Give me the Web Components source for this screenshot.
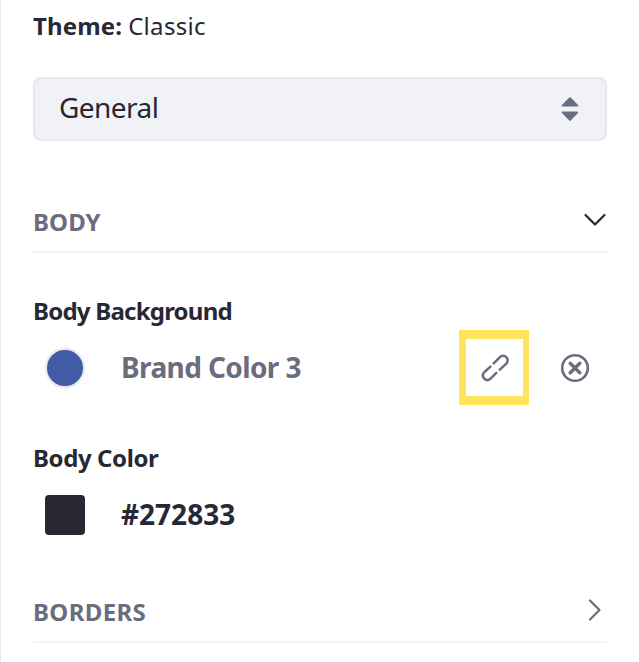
<!DOCTYPE html>
<html lang="en">
<head>
<meta charset="utf-8">
<title>Theme settings</title>
<style>
html, body { margin: 0; height: 100%; overflow: hidden; background: #fff; }
</style>
</head>
<body>
<style-panel></style-panel>
<script>
const define = (name, markup) => {
  const template = document.createElement('template');
  template.innerHTML = markup;
  customElements.define(name, class extends HTMLElement {
    constructor() {
      super();
      this.attachShadow({ mode: 'open' }).append(template.content.cloneNode(true));
    }
  });
};

define('theme-name', `
<style>
:host { display: block; height: 32px; line-height: 32px; font-size: 24px; white-space: nowrap; }
b { letter-spacing: 0.15px; }
span { letter-spacing: 0.3px; margin-left: 6px; }
</style><b>Theme:</b><span><slot></slot></span>`);

define('select-box', `
<style>
:host { display: flex; align-items: center; justify-content: space-between; box-sizing: border-box;
  height: 64px; padding: 0 26px 0 24px; border: 2px solid #e7e7ed; border-radius: 8px; background: #f1f2f5; }
span { font-size: 28px; line-height: 36px; margin-bottom: 4px; letter-spacing: -0.55px; }
svg { display: block; }
</style><span><slot></slot></span>
<svg width="18" height="26" viewBox="0 0 18 26" fill="#6b6c7e"><path d="M1.6 10.5Q0 10.5 1 9L8 1.8Q9 .8 10 1.8L17 9Q18 10.5 16.4 10.5ZM1.6 15.5Q0 15.5 1 17L8 24.2Q9 25.2 10 24.2L17 17Q18 15.5 16.4 15.5Z"/></svg>`);

define('section-header', `
<style>
:host { display: flex; align-items: center; justify-content: space-between; box-sizing: border-box;
  height: 61px; border-bottom: 2px solid #f1f2f5; color: #6b6c7e; font-weight: 700; font-size: 24px; line-height: 32px; }
span { letter-spacing: var(--tracking, 0); }
</style><span><slot></slot></span><slot name="icon"></slot>`);

define('field-label', `
<style>
:host { display: block; height: 32px; line-height: 32px; font-size: 24px; font-weight: 700; letter-spacing: var(--tracking, 0); }
</style><slot></slot>`);

define('color-row', `
<style>
:host { display: flex; align-items: center; height: 75px; margin-top: 3px; padding-left: 12px; }
i { box-sizing: border-box; width: 40px; height: 40px; margin-top: 1px; background: var(--swatch);
  border-radius: var(--radius, 4px); border: var(--edge, none); }
span { margin: 0 auto 1px 36px; font-size: 28px; line-height: 36px; font-weight: 700; letter-spacing: var(--tracking, 0); color: var(--ink, inherit); white-space: nowrap; }
</style><i></i><span><slot></slot></span><slot name="actions"></slot>`);

define('link-button', `
<style>
:host { display: flex; box-sizing: border-box; width: 70px; height: 75px; border: solid #ffe45c; border-width: 9px 6px 9px 7px;
  align-items: center; justify-content: center; }
</style>
<svg width="30" height="30" viewBox="0 0 30 30" fill="none" stroke="#6b6c7e" stroke-width="2.5" stroke-linecap="round">
<path d="M13.7 10.4L19.9 4.2A4.5 4.5 0 0 1 26.3 10.6L19.8 16.6M10.4 13.7L3.9 19.7A4.5 4.5 0 0 0 10.1 26.1L16.3 19.9"/></svg>`);

define('clear-button', `
<style>
:host { display: block; margin: 1px 17px 0 31px; height: 30px; }
svg { display: block; }
</style>
<svg width="30" height="30" viewBox="0 0 30 30" fill="none" stroke="#6b6c7e">
<circle cx="15" cy="15" r="12.8" stroke-width="2.6"/><path d="M10.2 10.2L19.8 19.8M19.8 10.2L10.2 19.8" stroke-width="3.4" stroke-linecap="round"/></svg>`);

define('style-panel', `
<style>
:host { display: block; box-sizing: border-box; height: 662px; padding: 10px 32px 0; border-left: 1px solid #e7e7ed;
  font-family: "Noto Sans", sans-serif; color: #272833; background: #fff; }
select-box { margin-top: 35px; }
.body { margin-top: 51px; }
.borders { margin-top: 30px; }
.first { margin-top: 42px; }
.second { margin-top: 37px; }
svg { display: block; fill: none; stroke-width: 2.2; stroke-linecap: round; stroke-linejoin: round; }
</style>
<theme-name>Classic</theme-name>
<select-box>General</select-box>
<section-header class="body" style="--tracking:0.1px">BODY
<svg slot="icon" width="24" height="16" viewBox="0 0 24 16" stroke="#272833" style="margin-bottom:4px"><path d="M2.5 3L12 12.5L21.5 3"/></svg></section-header>
<field-label class="first" style="--tracking:-0.77px">Body Background</field-label>
<color-row style="--swatch:#425ba7;--radius:50%;--edge:2px solid #e7e7ed;--ink:#6b6c7e;--tracking:-0.6px">Brand Color 3
<link-button slot="actions"></link-button><clear-button slot="actions"></clear-button></color-row>
<field-label class="second" style="--tracking:-0.4px">Body Color</field-label>
<color-row style="--swatch:#272833;--tracking:0">#272833</color-row>
<section-header class="borders" style="--tracking:0.35px">BORDERS
<svg slot="icon" width="16" height="24" viewBox="0 0 16 24" stroke="#6b6c7e" style="margin:0 4px 3px 0"><path d="M3 2.5L12.5 12L3 21.5"/></svg></section-header>`);
</script>
</body>
</html>
